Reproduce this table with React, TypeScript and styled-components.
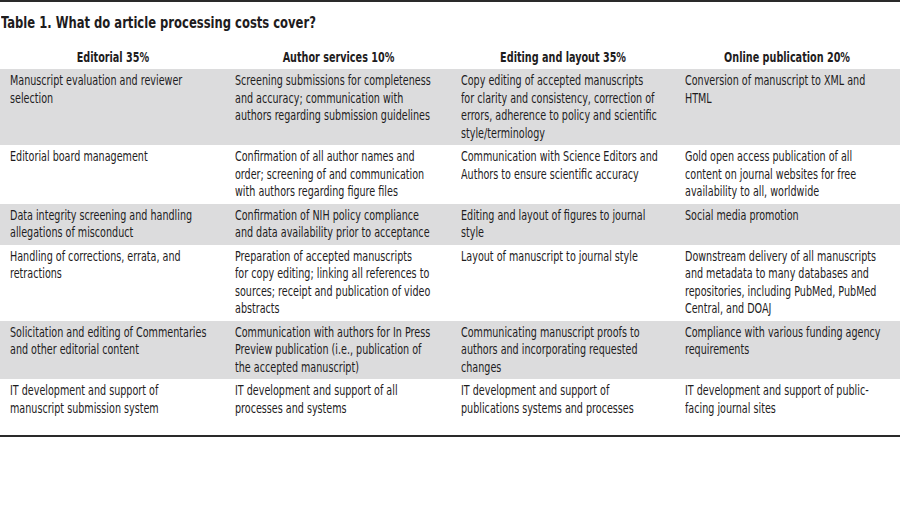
import React from 'react';
import styled, {createGlobalStyle} from "styled-components";

type Row = {
    cells: string[][],
    shaded: boolean,
}

const headers = ['Editorial 35%', 'Author services 10%', 'Editing and layout 35%', 'Online publication 20%'];

const rows: Row[] = [
    {
        shaded: true,
        cells: [
            ['Manuscript evaluation and reviewer', 'selection'],
            ['Screening submissions for completeness', 'and accuracy; communication with', 'authors regarding submission guidelines'],
            ['Copy editing of accepted manuscripts', 'for clarity and consistency, correction of', 'errors, adherence to policy and scientific', 'style/terminology'],
            ['Conversion of manuscript to XML and', 'HTML'],
        ],
    },
    {
        shaded: false,
        cells: [
            ['Editorial board management'],
            ['Confirmation of all author names and', 'order; screening of and communication', 'with authors regarding figure files'],
            ['Communication with Science Editors and', 'Authors to ensure scientific accuracy'],
            ['Gold open access publication of all', 'content on journal websites for free', 'availability to all, worldwide'],
        ],
    },
    {
        shaded: true,
        cells: [
            ['Data integrity screening and handling', 'allegations of misconduct'],
            ['Confirmation of NIH policy compliance', 'and data availability prior to acceptance'],
            ['Editing and layout of figures to journal', 'style'],
            ['Social media promotion'],
        ],
    },
    {
        shaded: false,
        cells: [
            ['Handling of corrections, errata, and', 'retractions'],
            ['Preparation of accepted manuscripts', 'for copy editing; linking all references to', 'sources; receipt and publication of video', 'abstracts'],
            ['Layout of manuscript to journal style'],
            ['Downstream delivery of all manuscripts', 'and metadata to many databases and', 'repositories, including PubMed, PubMed', 'Central, and DOAJ'],
        ],
    },
    {
        shaded: true,
        cells: [
            ['Solicitation and editing of Commentaries', 'and other editorial content'],
            ['Communication with authors for In Press', 'Preview publication (i.e., publication of', 'the accepted manuscript)'],
            ['Communicating manuscript proofs to', 'authors and incorporating requested', 'changes'],
            ['Compliance with various funding agency', 'requirements'],
        ],
    },
    {
        shaded: false,
        cells: [
            ['IT development and support of', 'manuscript submission system'],
            ['IT development and support of all', 'processes and systems'],
            ['IT development and support of', 'publications systems and processes'],
            ['IT development and support of public-', 'facing journal sites'],
        ],
    },
];

const App = (): JSX.Element => {
    return (
        <>
            <GlobalStyle/>
            <Page>
                <Title><TitleText>Table 1. What do article processing costs cover?</TitleText></Title>
                <Table>
                    <HeaderRow>
                        {headers.map(h => <HeaderCell key={h}><HeaderText>{h}</HeaderText></HeaderCell>)}
                    </HeaderRow>
                    {rows.map((row, i) => (
                        <BodyRow key={i} $shaded={row.shaded} $last={i === rows.length - 1}>
                            {row.cells.map((lines, j) => (
                                <Cell key={j}>
                                    {lines.map((l, k) => <Line key={k}>{l}</Line>)}
                                </Cell>
                            ))}
                        </BodyRow>
                    ))}
                </Table>
            </Page>
        </>
    );
}

// styles
const GlobalStyle = createGlobalStyle`
  html, body {
    margin: 0;
    padding: 0;
    background: #fff;
  }
  body {
    font-family: "DejaVu Sans Condensed", "Liberation Sans", sans-serif;
    color: #1e1c1d;
  }
`

const Page = styled.div`
  width: 900px;
  height: 507px;
  border-top: 2px solid #2a2a2a;
  box-sizing: border-box;
`

const Title = styled.h1`
  margin: 0;
  padding: 12px 0 0 1px;
  height: 32px;
  box-sizing: border-box;
  font-size: 16.5px;
  font-weight: 700;
  line-height: 18px;
  white-space: nowrap;
`

// the reference face is narrower than anything installed, so squeeze the text
const TitleText = styled.span`
  display: inline-block;
  transform: scaleX(0.78);
  transform-origin: left center;
`

const Table = styled.div`
  display: flex;
  flex-direction: column;
  border-bottom: 2px solid #2a2a2a;
`

const HeaderRow = styled.div`
  display: grid;
  grid-template-columns: 225px 226px 224px 225px;
  height: 35px;
  align-items: end;
  padding-bottom: 3px;
  box-sizing: border-box;
`

const HeaderCell = styled.div`
  text-align: center;
  font-size: 14.5px;
  font-weight: 700;
  line-height: 18px;
  white-space: nowrap;
`

const HeaderText = styled.span`
  display: inline-block;
  transform: scaleX(0.74);
  transform-origin: center;
`

const BodyRow = styled.div<{ $shaded: boolean, $last: boolean }>`
  display: grid;
  grid-template-columns: 225px 226px 224px 225px;
  background: ${p => p.$shaded ? '#dcdcdd' : '#fff'};
  padding: 3px 0 ${p => p.$last ? '18px' : '3px'};
`

const Cell = styled.div`
  padding-left: 10px;
  font-size: 13.5px;
  line-height: 17.5px;
`

const Line = styled.div`
  white-space: nowrap;
  transform: scaleX(0.79);
  transform-origin: left center;
`

export default App;
